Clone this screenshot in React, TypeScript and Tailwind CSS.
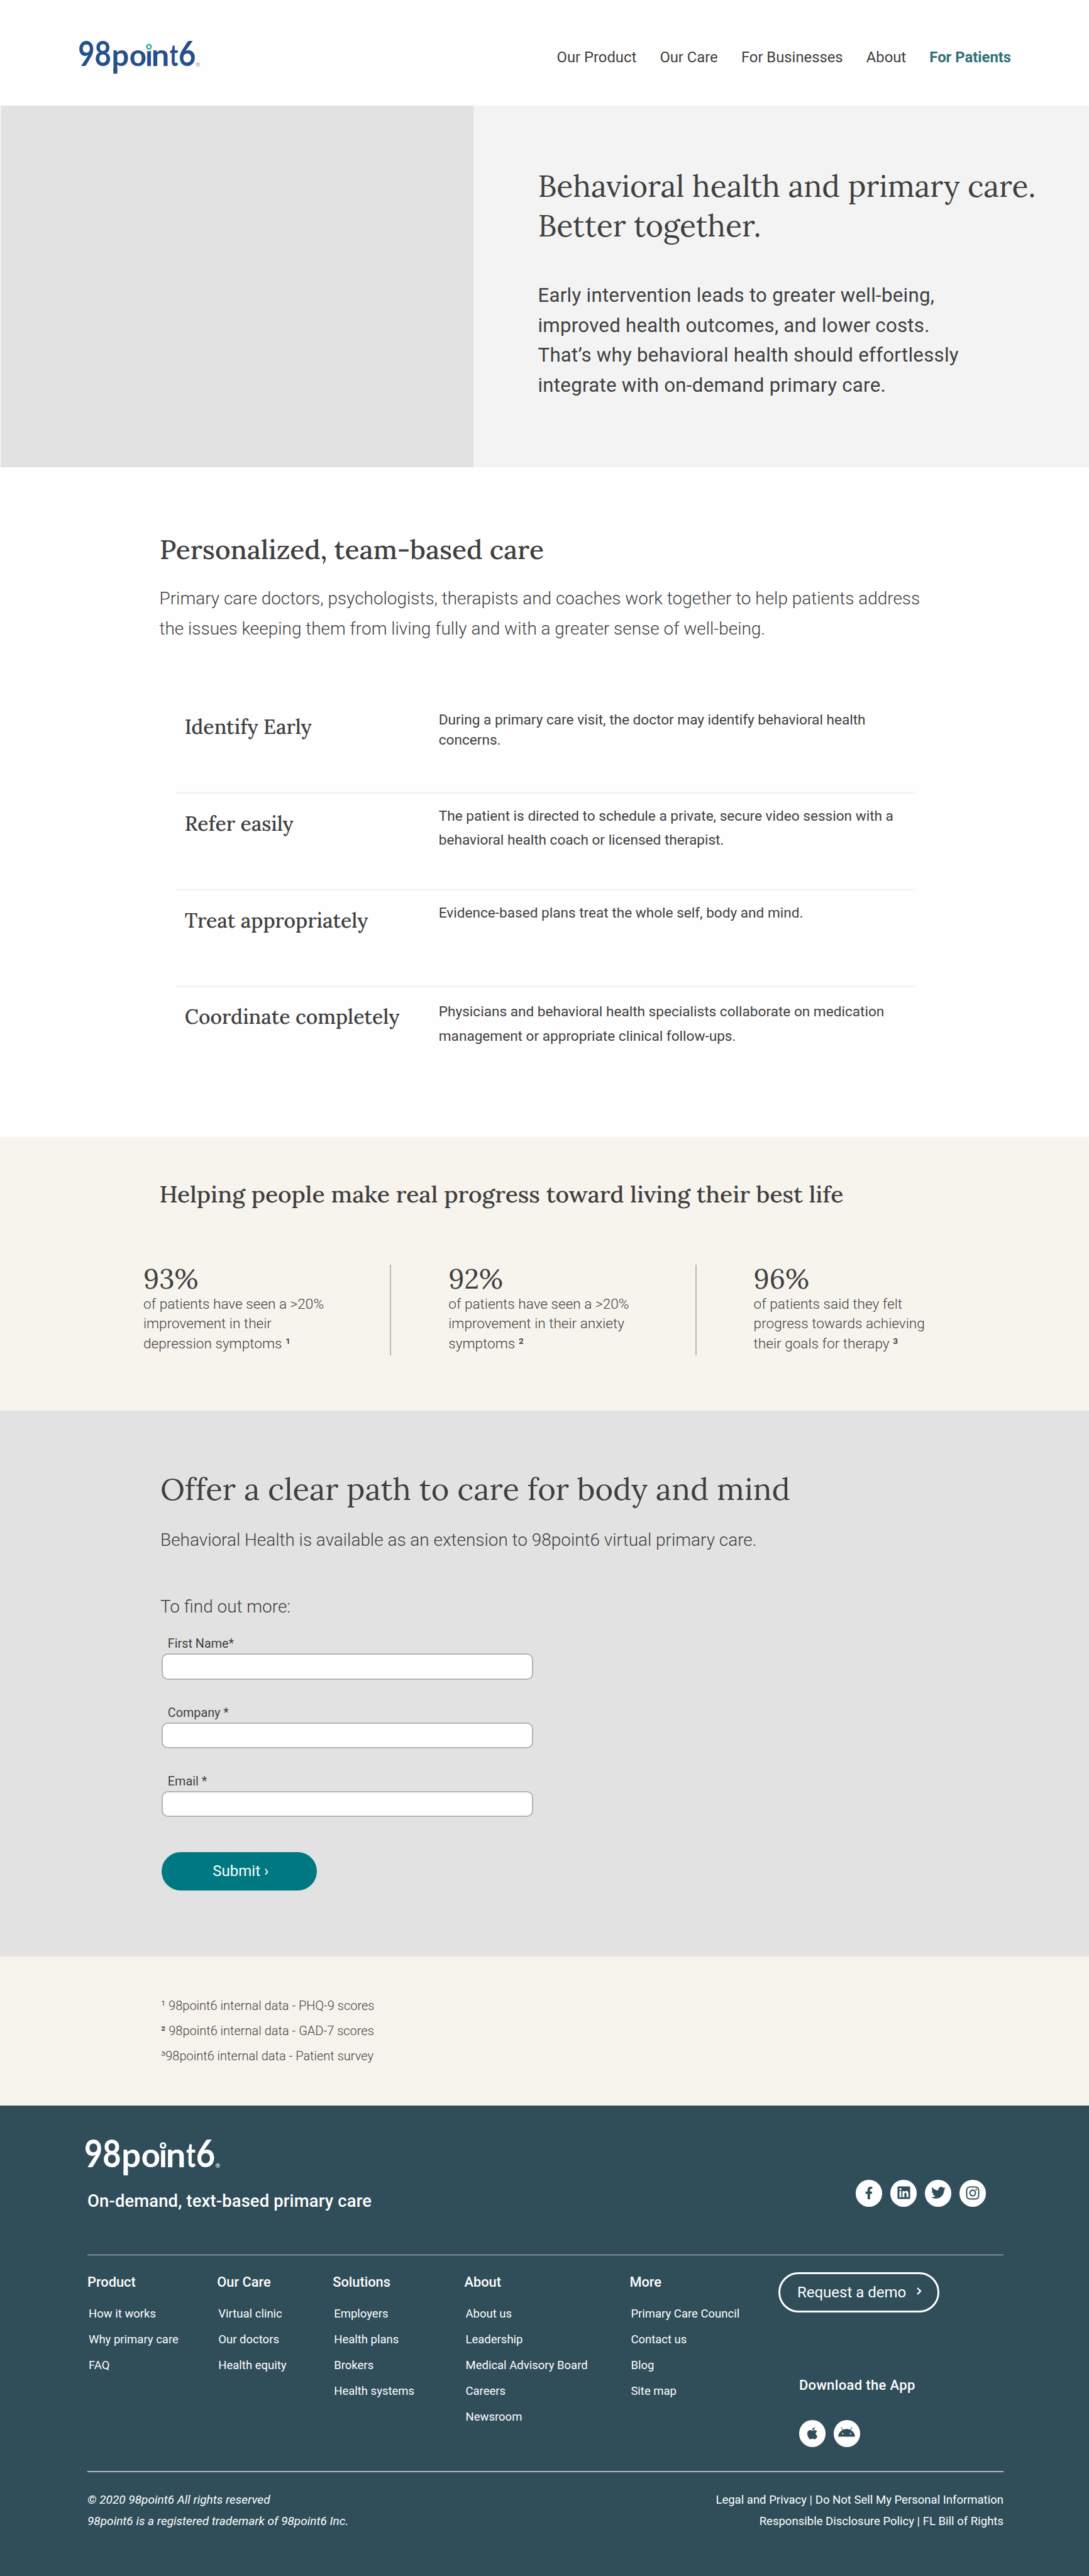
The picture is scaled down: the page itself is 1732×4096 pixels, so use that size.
import React from "react";
import { FaAndroid, FaApple, FaFacebookF, FaInstagram, FaLinkedin, FaTwitter } from "react-icons/fa";

const NAV = ["Our Product", "Our Care", "For Businesses", "About"];

const STEPS = [
  { title: "Identify Early", lines: ["During a primary care visit, the doctor may identify behavioral health", "concerns."], text: "pt-[20.3px] leading-[32.5px]" },
  { title: "Refer easily", lines: ["The patient is directed to schedule a private, secure video session with a", "behavioral health coach or licensed therapist."], text: "pt-[16.7px] leading-[38.5px]" },
  { title: "Treat appropriately", lines: ["Evidence-based plans treat the whole self, body and mind."], text: "pt-[17px] leading-[38.5px]" },
  { title: "Coordinate completely", lines: ["Physicians and behavioral health specialists collaborate on medication", "management or appropriate clinical follow-ups."], text: "pt-[19.9px] leading-[38.9px]" },
];

const STATS = [
  { value: "93%", lines: ["of patients have seen a >20%", "improvement in their", "depression symptoms "], note: "¹" },
  { value: "92%", lines: ["of patients have seen a >20%", "improvement in their anxiety", "symptoms "], note: "²" },
  { value: "96%", lines: ["of patients said they felt", "progress towards achieving", "their goals for therapy "], note: "³" },
];

const COLUMNS = [
  { title: "Product", width: "w-[206.3px]", links: ["How it works", "Why primary care", "FAQ"] },
  { title: "Our Care", width: "w-[183.9px]", links: ["Virtual clinic", "Our doctors", "Health equity"] },
  { title: "Solutions", width: "w-[209.3px]", links: ["Employers", "Health plans", "Brokers", "Health systems"] },
  { title: "About", width: "w-[262.9px]", links: ["About us", "Leadership", "Medical Advisory Board", "Careers", "Newsroom"] },
  { title: "More", width: "w-[236.5px]", links: ["Primary Care Council", "Contact us", "Blog", "Site map"] },
];

const SERIF = "font-['Lora','Liberation_Serif',serif]";

function Logo({ id, className, ring, mark }: { id: string; className: string; ring: string; mark: string }) {
  return (
    <svg viewBox="91 57 961 261" className={className} fill="currentColor" aria-label="98point6" overflow="visible">
      <defs>
        <clipPath id={id}>
          <rect x="610" y="138" width="54" height="130" />
        </clipPath>
      </defs>
      <g fontFamily="Lato, sans-serif" fontWeight="700">
        <text transform="translate(82 258) scale(0.828 1)" fontSize="275">98</text>
        <text x="349" y="258" fontSize="237" textLength="139" lengthAdjust="spacingAndGlyphs">p</text>
        <text x="490" y="258" fontSize="237" textLength="136" lengthAdjust="spacingAndGlyphs">o</text>
        <text x="617" y="258" fontSize="237" clipPath={`url(#${id})`}>i</text>
        <text x="666" y="258" fontSize="237" textLength="143" lengthAdjust="spacingAndGlyphs">n</text>
        <text x="811" y="258" fontSize="237" textLength="68" lengthAdjust="spacingAndGlyphs">t</text>
        <text transform="translate(882 258) scale(0.86 1)" fontSize="275">6</text>
      </g>
      <rect x="363" y="280" width="31" height="38" />
      <circle cx="646" cy="104" r="17" fill="none" strokeWidth="13" className={ring} />
      <text x="1020" y="262" fontSize="44" fontFamily="Roboto, sans-serif" className={mark}>®</text>
    </svg>
  );
}

function Badge({ children }: { children: React.ReactNode }) {
  return <span className="flex h-[43px] w-[42px] items-center justify-center rounded-full bg-white pb-[2px] text-[#304d5a]">{children}</span>;
}

export default function App() {
  return (
    <div className="flex h-[4096px] w-[1732px] flex-col overflow-hidden bg-[#fefefe] font-['Roboto',sans-serif] text-[#3f3f40]">
      <header className="flex h-[168px] shrink-0 items-start justify-between pr-[124px] pl-[126px]">
        <Logo id="header-i" className="mt-[65.3px] h-[52.2px] w-[192px] text-[#26508b]" ring="stroke-[#45aea5]" mark="fill-[#9a9a9a]" />
        <nav className="mt-[79px] flex gap-[37.2px] text-[23.8px] leading-6">
          {NAV.map((item) => (
            <a key={item}>{item}</a>
          ))}
          <a className="font-bold text-[#2f7078]">For Patients</a>
        </nav>
      </header>

      <section className="flex h-[575.4px] shrink-0 pl-px">
        <div className="w-[752px] bg-[#e2e2e2]" />
        <div className="flex-1 bg-[#f3f3f3] pt-[95.5px] pl-[102.5px]">
          <h1 className={`${SERIF} text-[48px] leading-[63.7px] whitespace-nowrap`}>
            Behavioral health and primary care.
            <br />
            Better together.
          </h1>
          <p className="mt-[54.7px] text-[31.2px] leading-[47.9px] tracking-[0.28px] whitespace-nowrap">
            Early intervention leads to greater well-being,
            <br />
            improved health outcomes, and lower costs.
            <br />
            That’s why behavioral health should effortlessly
            <br />
            integrate with on-demand primary care.
          </p>
        </div>
      </section>

      <section className="h-[1064.6px] shrink-0 pt-[103px] whitespace-nowrap">
        <h2 className={`${SERIF} pl-[254px] text-[42.6px] leading-[56px] font-medium`}>Personalized, team-based care</h2>
        <p className="mt-[25.9px] pl-[253.5px] text-[27.95px] leading-[48.1px] font-light">
          Primary care doctors, psychologists, therapists and coaches work together to help patients address
          <br />
          the issues keeping them from living fully and with a greater sense of well-being.
        </p>
        <div className="mt-[83.9px] ml-[280.8px] w-[1175px]">
          {STEPS.map((step) => (
            <div key={step.title} className="flex h-[153.8px] border-b-[3px] border-[#f4f4f4] last:border-b-0">
              <h3 className={`${SERIF} w-[417px] pt-[27.7px] pl-[13px] text-[31.95px] leading-10 font-medium`}>{step.title}</h3>
              <p className={`${step.text} text-[22.6px]`}>
                {step.lines.map((line) => (
                  <span key={line} className="block">{line}</span>
                ))}
              </p>
            </div>
          ))}
        </div>
      </section>

      <section className="h-[435px] shrink-0 bg-[#f7f4ee] pt-[66.2px] whitespace-nowrap">
        <h2 className={`${SERIF} pl-[253.5px] text-[37.3px] leading-[48px] font-medium`}>
          Helping people make real progress toward living their best life
        </h2>
        <div className="mt-[88.8px] ml-[228px] flex h-[144.3px] gap-[91px]">
          {STATS.map((stat) => (
            <div key={stat.value} className="w-[394.3px] border-r-2 border-[#bcbab7] last:border-r-0">
              <div className={`${SERIF} text-[43.6px] leading-[44px]`}>{stat.value}</div>
              <p className="mt-[2.7px] text-[22.6px] leading-[31.8px] font-light">
                {stat.lines[0]}
                <br />
                {stat.lines[1]}
                <br />
                {stat.lines[2]}
                <span className="font-normal">{stat.note}</span>
              </p>
            </div>
          ))}
        </div>
      </section>

      <section className="h-[868.5px] shrink-0 bg-[#e2e2e2] pt-[92.4px] pl-[255px] whitespace-nowrap">
        <h2 className={`${SERIF} text-[49px] leading-[64px]`}>Offer a clear path to care for body and mind</h2>
        <p className="mt-[29.7px] text-[27.95px] leading-10 font-light">Behavioral Health is available as an extension to 98point6 virtual primary care.</p>
        <p className="mt-[66.2px] text-[27.95px] leading-10 font-light">To find out more:</p>
        <form className="mt-[27.1px] ml-[2.3px] w-[590.5px]">
          <div className="flex flex-col gap-[40.8px]">
            {["First Name*", "Company *", "Email *"].map((label) => (
              <label key={label} className="flex flex-col gap-[3px] text-[19.8px] leading-6">
                <span className="pl-[9.5px]">{label}</span>
                <input className="h-[41.5px] w-full rounded-[10px] border-2 border-[#b3b3b3] bg-white" />
              </label>
            ))}
          </div>
          <button type="button" className="mt-[55.9px] flex h-[60.6px] w-[247px] items-center justify-center rounded-full bg-[#007882] pb-px pl-1 text-[24px] text-white">
            Submit ›
          </button>
        </form>
      </section>

      <section className="h-[236.5px] shrink-0 bg-[#f6f3ed] pt-[57.6px] pl-[256px] text-[20px] leading-[40.15px] font-light whitespace-nowrap">
        <p>¹ 98point6 internal data - PHQ-9 scores</p>
        <p><span className="font-normal">²</span> 98point6 internal data - GAD-7 scores</p>
        <p>³98point6 internal data - Patient survey</p>
      </section>

      <footer className="h-[748px] shrink-0 bg-[#304d5a] pr-[136px] pl-[139px] whitespace-nowrap text-white">
        <div className="flex h-[237.3px] items-start justify-between">
          <div className="pt-[53px]">
            <Logo id="footer-i" className="-ml-[3px] h-[58px] w-[213.5px]" ring="stroke-white" mark="fill-white" />
            <p className="mt-[23.3px] text-[27.4px] leading-9 font-medium tracking-[0.15px]">On-demand, text-based primary care</p>
          </div>
          <div className="flex gap-[13px] pt-[118.4px] pr-[28px]">
            <Badge><FaFacebookF size={20} /></Badge>
            <Badge><FaLinkedin size={23} /></Badge>
            <Badge><FaTwitter size={23} /></Badge>
            <Badge><FaInstagram size={24} /></Badge>
          </div>
        </div>

        <div className="flex h-[346px] border-t border-b-2 border-t-[#c3c6c7] border-b-[#b5babd]">
          {COLUMNS.map((column) => (
            <div key={column.title} className={`${column.width} shrink-0 pt-[28.8px]`}>
              <h4 className="text-[21.8px] leading-7 font-medium">{column.title}</h4>
              <ul className="mt-[15.6px] pl-[2px] text-[18.5px] leading-[41.1px]">
                {column.links.map((link) => (
                  <li key={link}>{link}</li>
                ))}
              </ul>
            </div>
          ))}
          <div className="pt-[26.5px]">
            <button type="button" className="flex h-[64.7px] w-[256px] items-center rounded-full border-[3px] border-white pl-[27px] text-[24px]">
              Request a demo
              <svg viewBox="0 0 8 12" className="mb-[4px] ml-[17px] h-[12px] w-[8px]" fill="none" stroke="currentColor" strokeWidth="2.4">
                <path d="M1 1l5 5-5 5" />
              </svg>
            </button>
            <div className="mt-[101.6px] pl-[33px]">
              <h4 className="text-[22px] leading-7 font-medium tracking-[0.35px]">Download the App</h4>
              <div className="mt-[41.2px] flex gap-[13px]">
                <Badge><FaApple size={22} /></Badge>
                <Badge><FaAndroid size={27} /></Badge>
              </div>
            </div>
          </div>
        </div>

        <div className="flex justify-between pt-[26.9px] text-[18.55px] leading-[34.3px]">
          <p className="text-[19.05px] italic">
            © 2020 98point6 All rights reserved
            <br />
            98point6 is a registered trademark of 98point6 Inc.
          </p>
          <p className="text-right">
            Legal and Privacy | Do Not Sell My Personal Information
            <br />
            Responsible Disclosure Policy | FL Bill of Rights
          </p>
        </div>
      </footer>
    </div>
  );
}
